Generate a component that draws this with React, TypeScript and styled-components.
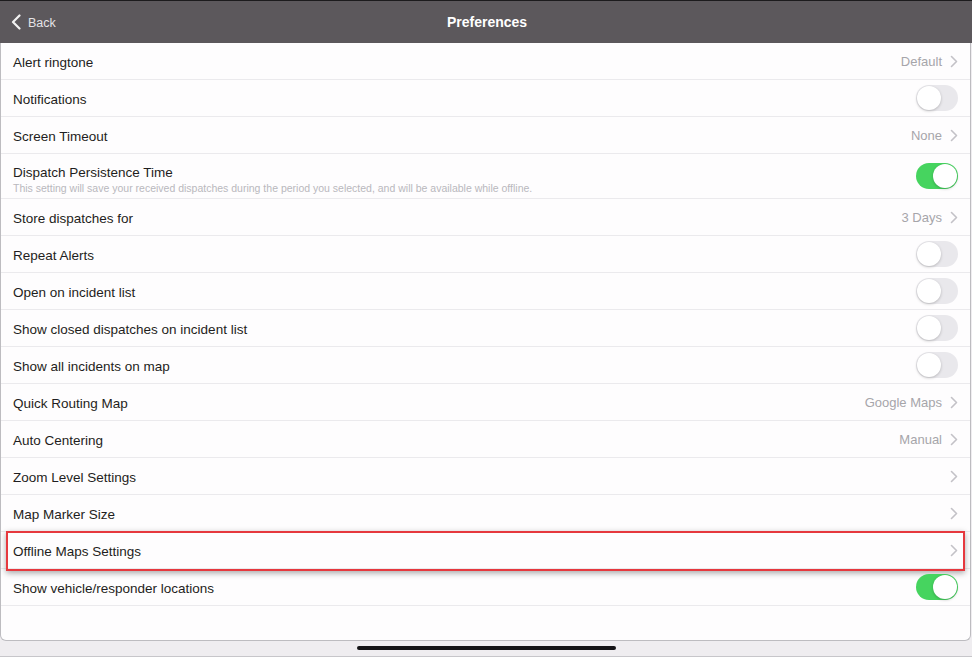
import { createGlobalStyle, styled } from "styled-components";

const GlobalStyle = createGlobalStyle`
  html, body {
    margin: 0;
    padding: 0;
    background: #efedf0;
  }
  body {
    font-family: "Liberation Sans", Arial, sans-serif;
    -webkit-font-smoothing: antialiased;
  }
`;

type Setting = {
  label: string;
  hint?: string;
  value?: string;
  chevron?: boolean;
  toggle?: boolean;
  on?: boolean;
  highlight?: boolean;
};

const settings: Setting[] = [
  { label: "Alert ringtone", value: "Default", chevron: true },
  { label: "Notifications", toggle: true },
  { label: "Screen Timeout", value: "None", chevron: true },
  {
    label: "Dispatch Persistence Time",
    hint: "This setting will save your received dispatches during the period you selected, and will be available while offline.",
    toggle: true,
    on: true,
  },
  { label: "Store dispatches for", value: "3 Days", chevron: true },
  { label: "Repeat Alerts", toggle: true },
  { label: "Open on incident list", toggle: true },
  { label: "Show closed dispatches on incident list", toggle: true },
  { label: "Show all incidents on map", toggle: true },
  { label: "Quick Routing Map", value: "Google Maps", chevron: true },
  { label: "Auto Centering", value: "Manual", chevron: true },
  { label: "Zoom Level Settings", chevron: true },
  { label: "Map Marker Size", chevron: true },
  { label: "Offline Maps Settings", chevron: true, highlight: true },
  { label: "Show vehicle/responder locations", toggle: true, on: true },
];

export default function App() {
  return (
    <>
      <GlobalStyle />
      <Screen>
        <Header>
          <BackButton>
            <svg width="10" height="16" viewBox="0 0 10 16">
              <path
                d="M8.5 1.5 L2 8 L8.5 14.5"
                fill="none"
                stroke="#f2f2f2"
                strokeWidth="2.2"
                strokeLinecap="round"
                strokeLinejoin="round"
              />
            </svg>
            <span>Back</span>
          </BackButton>
          <Title>Preferences</Title>
        </Header>

        <Panel>
          {settings.map((s) => (
            <Row key={s.label} $tall={!!s.hint} $highlight={!!s.highlight}>
              <Texts $tall={!!s.hint}>
                <Label>{s.label}</Label>
                {s.hint && <Hint>{s.hint}</Hint>}
              </Texts>
              <Accessory>
                {s.value && <Value>{s.value}</Value>}
                {s.chevron && (
                  <svg width="8" height="13" viewBox="0 0 8 13">
                    <path
                      d="M1.5 1.5 L6.5 6.5 L1.5 11.5"
                      fill="none"
                      stroke="#c3c2c7"
                      strokeWidth="1.6"
                      strokeLinecap="round"
                      strokeLinejoin="round"
                    />
                  </svg>
                )}
                {s.toggle && (
                  <Toggle $on={!!s.on}>
                    <Knob $on={!!s.on} />
                  </Toggle>
                )}
              </Accessory>
            </Row>
          ))}
        </Panel>

        <Footer>
          <HomeBar />
        </Footer>
      </Screen>
    </>
  );
}

const Screen = styled.div`
  display: flex;
  flex-direction: column;
  width: 972px;
  height: 657px;
  overflow: hidden;
`;

const Header = styled.div`
  position: relative;
  display: flex;
  align-items: center;
  justify-content: center;
  height: 42px;
  border-top: 1px solid #1c1b1d;
  background: #5c585c;
`;

const BackButton = styled.div`
  position: absolute;
  left: 11px;
  top: 13px;
  display: flex;
  align-items: center;
  gap: 7px;
  color: #e4e3e6;
  font-size: 12.5px;

  span {
    margin-top: 1px;
  }
`;

const Title = styled.div`
  color: #ffffff;
  font-size: 14px;
  font-weight: 700;
  margin-left: 2px;
`;

const Panel = styled.div`
  flex: 1;
  background: #fefdfe;
  border: 1px solid #bdbcc0;
  border-top: none;
  border-radius: 0 0 6px 6px;
  margin-right: 1px;
`;

const Row = styled.div<{ $tall: boolean; $highlight: boolean }>`
  position: relative;
  display: flex;
  align-items: center;
  justify-content: space-between;
  height: ${(p) => (p.$tall ? 44 : 36)}px;
  padding: 0 12px 0 12px;
  border-bottom: 1px solid #ebeaed;

  ${(p) =>
    p.$highlight &&
    `
    &::after {
      content: "";
      position: absolute;
      left: 5px;
      right: 5px;
      top: -1px;
      bottom: -3px;
      border: 2.5px solid #e6383e;
      box-shadow: 0 2px 6px rgba(0, 0, 0, 0.35);
      pointer-events: none;
    }
  `}
`;

const Texts = styled.div<{ $tall: boolean }>`
  display: flex;
  flex-direction: column;
  gap: 2px;
  padding-top: ${(p) => (p.$tall ? 6 : 2)}px;
`;

const Label = styled.div`
  color: #1f1e21;
  font-size: 13.5px;
`;

const Hint = styled.div`
  color: #b9b8bd;
  font-size: 10.5px;
`;

const Accessory = styled.div`
  display: flex;
  align-items: center;
  gap: 8px;
`;

const Value = styled.div`
  color: #a6a5aa;
  font-size: 13px;
  padding-top: 1px;
`;

const Toggle = styled.div<{ $on: boolean }>`
  position: relative;
  width: 42px;
  height: 26px;
  border-radius: 13px;
  background: ${(p) => (p.$on ? "#46d45f" : "#e9e8ec")};
`;

const Knob = styled.div<{ $on: boolean }>`
  position: absolute;
  top: 1px;
  left: ${(p) => (p.$on ? 17 : 1)}px;
  width: 24px;
  height: 24px;
  border-radius: 50%;
  background: #ffffff;
  box-shadow: 0 1px 3px rgba(0, 0, 0, 0.22);
`;

const Footer = styled.div`
  display: flex;
  justify-content: center;
  height: 15px;
  background: #efedf0;
  border-bottom: 1px solid #c7c6ca;
`;

const HomeBar = styled.div`
  width: 259px;
  height: 4px;
  margin-top: 5px;
  border-radius: 2px;
  background: #141316;
`;
